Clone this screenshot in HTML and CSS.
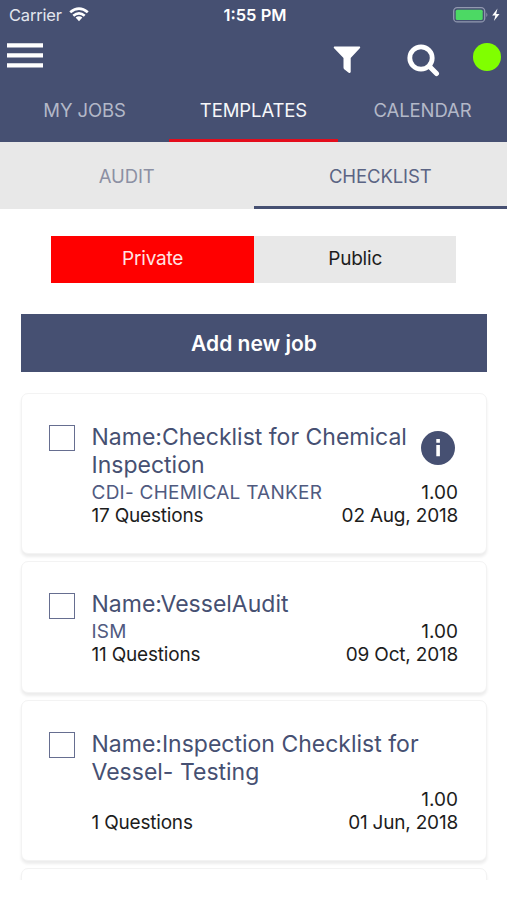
FILE: index.html
```html
<!DOCTYPE html>
<html lang="en">
<head>
<meta charset="utf-8">
<title>Templates</title>
<link rel="stylesheet" href="styles.css">
</head>
<body>
<header class="header">
  <div class="status">
    <div class="carrier"><span>Carrier</span>
      <svg class="wifi" viewBox="0 0 20 15" width="20" height="15"><g fill="none" stroke="#fff" stroke-width="2.7"><path d="M1.2 5.3Q10-2.2 18.8 5.3"/><path d="M4.3 8.7Q10 3.9 15.7 8.7"/></g><path d="M6.6 10.6Q10 8 13.4 10.6L10 14.2Z" fill="#fff"/></svg>
    </div>
    <div class="clock">1:55 PM</div>
    <div class="power">
      <svg viewBox="0 0 48 16" width="48" height="16"><rect x=".7" y=".7" width="31" height="14.2" rx="3.5" fill="none" stroke="#9299b0" stroke-width="1.3"/><rect x="2.7" y="2.7" width="27" height="10.3" rx="1.5" fill="#4cd964"/><path d="M33.4 5.5q2 2.300 0 4.600z" fill="#9299b0"/><path d="M44.5 1.500l-5.300 7h3.200l-1.500 5.500 5.600-7h-3.300z" fill="#fff"/></svg>
    </div>
  </div>
  <div class="toolbar">
    <svg class="menu" viewBox="0 0 36 25" width="36" height="25"><path d="M0 2.300h36M0 12.400h36M0 22.400h36" stroke="#fff" stroke-width="4.300"/></svg>
    <svg class="filter" viewBox="0 0 28 28" width="28" height="28"><path d="M1.300.5h25.400q1 .8.300 1.600l-9.300 9.800v14q-.5 1.700-2 .9l-4.500-3.600q-.7-.6-.7-1.600v-9.700L.9 2.100Q.3 1.300 1.300.5z" fill="#fff"/></svg>
    <svg class="search" viewBox="0 0 33 33" width="33" height="33"><circle cx="14" cy="14" r="11.200" fill="none" stroke="#fff" stroke-width="4.800"/><path d="M22.500 22.500l7 7" stroke="#fff" stroke-width="5" stroke-linecap="round"/></svg>
    <span class="online"></span>
  </div>
  <nav class="tabs">
    <span class="tab">MY JOBS</span>
    <span class="tab active">TEMPLATES</span>
    <span class="tab">CALENDAR</span>
  </nav>
</header>
<nav class="subtabs">
  <span class="subtab">AUDIT</span>
  <span class="subtab current">CHECKLIST</span>
</nav>
<main>
  <div class="segments"><span class="segment selected">Private</span><span class="segment">Public</span></div>
  <div class="add">Add new job</div>
  <section class="list">
    <article class="card">
      <span class="box"></span>
      <div class="body">
        <div class="title">Name:Checklist for Chemical<br>Inspection</div>
        <div class="row"><span class="kind">CDI- CHEMICAL TANKER</span><span class="num">1.00</span></div>
        <div class="row"><span class="count">17 Questions</span><span class="date">02 Aug, 2018</span></div>
      </div>
      <svg class="info" viewBox="0 0 34 34" width="34" height="34"><circle cx="17" cy="17" r="17" fill="#465072"/><path d="M15.300 8h3.600v3.700h-3.600zM15.300 14h3.600v11.300h-3.600z" fill="#fff"/></svg>
    </article>
    <article class="card single">
      <span class="box"></span>
      <div class="body">
        <div class="title">Name:VesselAudit</div>
        <div class="row"><span class="kind">ISM</span><span class="num">1.00</span></div>
        <div class="row"><span class="count">11 Questions</span><span class="date">09 Oct, 2018</span></div>
      </div>
    </article>
    <article class="card">
      <span class="box"></span>
      <div class="body">
        <div class="title">Name:Inspection Checklist for<br>Vessel- Testing</div>
        <div class="row"><span class="kind"></span><span class="num">1.00</span></div>
        <div class="row"><span class="count">1 Questions</span><span class="date">01 Jun, 2018</span></div>
      </div>
    </article>
    <article class="card"></article>
  </section>
</main>
</body>
</html>
```
FILE: styles.css
```css
* { box-sizing: border-box; }
body {
  margin: 0;
  height: 900px;
  overflow: hidden;
  background: #fff;
  color: #1d1d1d;
  font: 400 19px/24px Inter, "Liberation Sans", sans-serif;
}
svg { display: block; flex: none; }
.header { height: 142px; background: #465072; color: #fff; }
.status {
  display: grid;
  grid-template-columns: 1fr 80px 1fr;
  align-items: center;
  height: 30px;
  padding: 0 6px 0 9px;
  font-size: 16.5px;
}
.carrier { display: flex; align-items: center; gap: 7px; color: #e3e6ee; letter-spacing: -0.2px; }
.wifi { margin-top: -2px; }
.clock { font-weight: 600; white-space: nowrap; text-align: center; }
.power { display: flex; justify-content: flex-end; }
.toolbar { display: flex; height: 50px; padding: 13px 6px 0 7px; }
.menu { margin-right: auto; }
.filter { margin: 3px 46px 0 0; }
.search { margin: 1px 33px 0 0; }
.online { width: 28px; height: 28px; border-radius: 50%; background: #80ff00; }
.tabs { display: grid; grid-template-columns: repeat(3, 1fr); height: 62px; }
.tab {
  padding-top: 17.5px;
  text-align: center;
  font-size: 18.5px;
  letter-spacing: -0.1px;
  color: #b3b8c8;
  border-bottom: 3px solid transparent;
}
.tab.active { color: #f6f7fa; border-color: #e30d1c; }
.subtabs { display: grid; grid-template-columns: 1fr 1fr; height: 67px; background: #e8e8e8; }
.subtab {
  padding-top: 21.5px;
  text-align: center;
  font-size: 18.5px;
  letter-spacing: -0.1px;
  color: #8c90a3;
  border-bottom: 3px solid transparent;
}
.subtab.current { color: #5b6484; border-color: #465072; }
.segments {
  display: grid;
  grid-template-columns: 1fr 1fr;
  width: 405px;
  height: 47px;
  margin: 27px 0 0 51.4px;
}
.segment { text-align: center; line-height: 45px; background: #e8e8e8; letter-spacing: -0.2px; }
.segment.selected { background: #f00; color: #ffe3e3; }
.add {
  height: 58px;
  margin: 31px 20.5px 0 21.4px;
  background: #465072;
  color: #fff;
  text-align: center;
  font-weight: 600;
  font-size: 21px;
  line-height: 59px;
}
.list {
  display: flex;
  flex-direction: column;
  gap: 7px;
  height: 488px;
  margin-top: 20px;
  padding: 1px 20px 0 21px;
  overflow: hidden;
}
.card {
  display: flex;
  position: relative;
  flex: none;
  height: 160.5px;
  padding: 28.5px 28px 0 27px;
  border: 1px solid #f3f3f3;
  border-radius: 7px;
  background: #fff;
  box-shadow: 0 3px 3px #ededed;
}
.card.single { height: 132.5px; }
.box { flex: none; width: 26px; height: 26px; margin-top: 2.5px; border: 1px solid #666e90; }
.body { flex: 1; min-width: 0; margin-left: 16.5px; }
.title { font-size: 23px; line-height: 28.5px; color: #465072; white-space: nowrap; }
.row { display: flex; justify-content: space-between; height: 23.5px; line-height: 25px; white-space: nowrap; }
.kind { color: #505a80; letter-spacing: 0.25px; }
.count, .date { letter-spacing: -0.2px; }
.info { position: absolute; right: 31px; top: 37px; }
```
